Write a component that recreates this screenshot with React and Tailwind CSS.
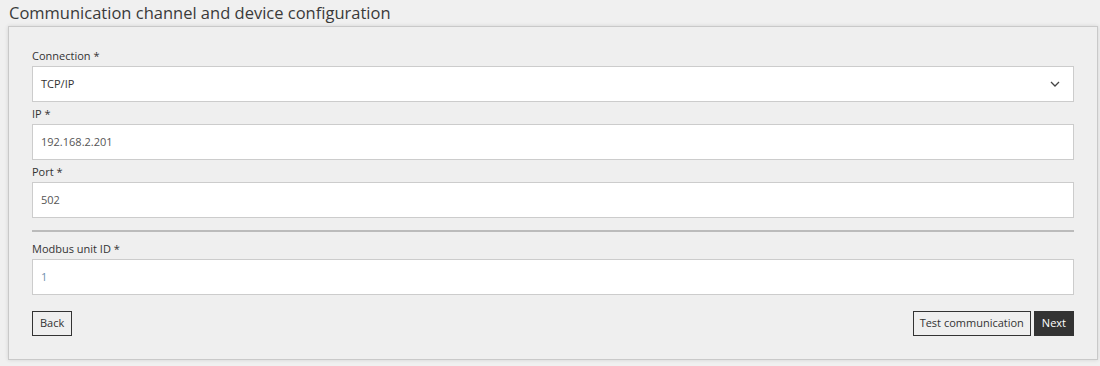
import React from 'react';

function Field({ label, value, valueClass = "text-[#555]", select }) {
    return (
        <div className="flex flex-col">
            <label className="h-4 leading-4 text-[11px] text-[#333] mb-[2px]">{label}</label>
            <div className="h-[36px] bg-white border border-[#cccccc] flex items-center pl-[8px] pr-[12px]">
                <span className={`flex-1 text-[11px] ${valueClass}`}>{value}</span>
                {select && (
                    <svg width="10" height="6" viewBox="0 0 10 6" className="mr-[1px]">
                        <path d="M1 1 L5 5 L9 1" fill="none" stroke="#444" strokeWidth="1.3" />
                    </svg>
                )}
            </div>
        </div>
    );
}

export default function App() {
    return (
        <div className="w-[1100px] h-[366px] bg-[#f0f0f0] overflow-hidden" style={{ fontFamily: '"Open Sans", "Noto Sans", sans-serif' }}>
            {/* Title */}
            <h1 className="h-[26px] pl-[9px] text-[16.5px] leading-[25px] text-[#3a3a3a] font-normal">
                Communication channel and device configuration
            </h1>

            {/* Panel */}
            <div className="ml-[8px] w-[1090px] h-[334px] bg-[#efefef] border border-[#c9c9c9] shadow-[0_0_4px_rgba(0,0,0,0.12)] px-[23px] pt-[21px]">
                <div className="flex flex-col gap-[4px]">
                    <Field label="Connection *" value="TCP/IP" valueClass="text-[#333]" select />
                    <Field label="IP *" value="192.168.2.201" />
                    <Field label="Port *" value="502" />
                </div>

                <div className="h-[2px] bg-[#bbbbbb] mt-[12px] mb-[9px]" />

                <Field label="Modbus unit ID *" value="1" valueClass="text-[#6f8fae]" />

                {/* Buttons */}
                <div className="flex justify-between mt-[16px]">
                    <button className="h-[25px] px-[7px] border border-[#333] text-[11px] text-[#333]">Back</button>
                    <div className="flex gap-[3px]">
                        <button className="h-[25px] px-[6px] border border-[#333] text-[11px] text-[#333]">Test communication</button>
                        <button className="h-[25px] px-[8px] bg-[#333] text-[11px] text-white">Next</button>
                    </div>
                </div>
            </div>
        </div>
    );
}
